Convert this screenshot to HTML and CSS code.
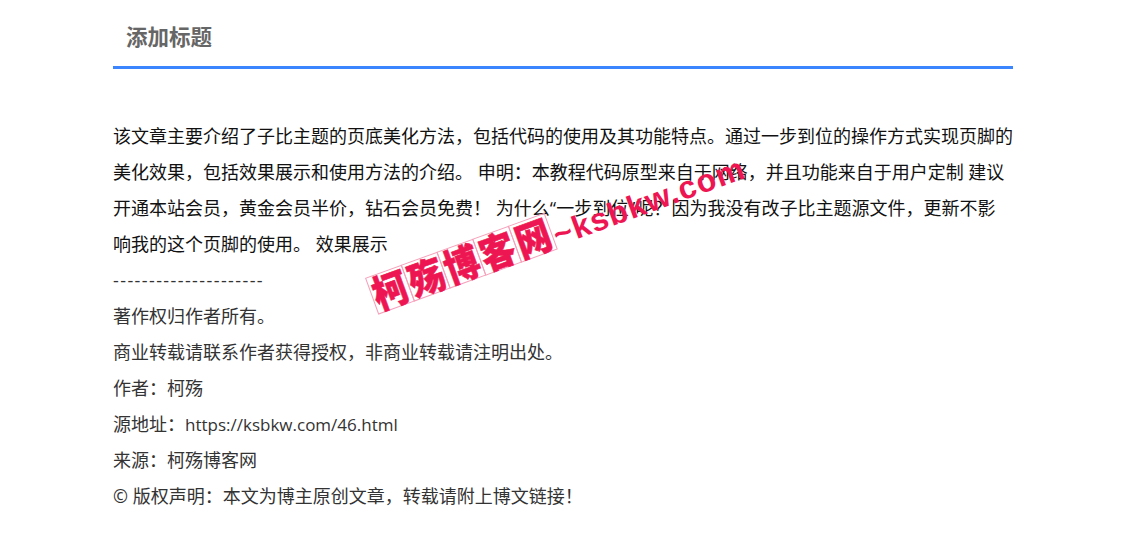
FILE: index.html
```html
<!DOCTYPE html>
<html lang="zh-CN">
<head>
<meta charset="utf-8">
<title>添加标题</title>
<link rel="stylesheet" href="styles.css">
</head>
<body>
<main class="page">
  <h2 class="title"><span>添加标题</span></h2>
  <p class="intro">该文章主要介绍了子比主题的页底美化方法，包括代码的使用及其功能特点。通过一步到位的操作方式实现页脚的美化效果，包括效果展示和使用方法的介绍。 申明：本教程代码原型来自于网络，并且功能来自于用户定制 建议开通本站会员，黄金会员半价，钻石会员免费！ 为什么<span class="quoted">“一步到位”</span>呢？因为我没有改子比主题源文件，更新不影响我的这个页脚的使用。 效果展示</p>
  <div class="copyright">
    <p class="dashes">---------------------</p>
    <p>著作权归作者所有。</p>
    <p>商业转载请联系作者获得授权，非商业转载请注明出处。</p>
    <p>作者：柯殇</p>
    <p>源地址：<span class="url">https://ksbkw.com/46.html</span></p>
    <p>来源：柯殇博客网</p>
    <p>© 版权声明：本文为博主原创文章，转载请附上博文链接！</p>
  </div>
</main>
<div class="watermark">
  <span class="cell"><span class="glyph">柯</span></span><span class="cell"><span class="glyph">殇</span></span><span class="cell"><span class="glyph">博</span></span><span class="cell"><span class="glyph">客</span></span><span class="cell"><span class="glyph">网</span></span><span class="domain">~ksbkw.com</span>
</div>
</body>
</html>
```
FILE: styles.css
```css
* { box-sizing: border-box; }
html, body { margin: 0; padding: 0; background: #fff; }
body {
  font-family: "Open Sans", "Noto Sans CJK SC", sans-serif;
  height: 557px;
  overflow: hidden;
  position: relative;
}
.page { width: 900px; margin: 0 0 0 113px; }
.title {
  margin: 0;
  height: 69px;
  padding: 21px 0 0 13px;
  border-bottom: 3px solid #3b86ff;
  font-size: 21.5px;
  line-height: 32px;
  font-weight: 700;
  color: #666;
}
.intro, .copyright p {
  margin: 0;
  font-size: 18px;
  line-height: 36px;
}
.intro { margin-top: 49px; color: #111; }
.quoted { letter-spacing: 0.2px; }
.copyright { color: #333; }
.copyright .dashes { letter-spacing: 1.4px; }
.url { font-size: 17px; line-height: 1; }
.watermark {
  position: absolute;
  left: 365px;
  top: 278px;
  display: flex;
  align-items: center;
  height: 39px;
  white-space: nowrap;
  transform-origin: 0 0;
  transform: rotate(-20deg);
  color: #ee1652;
  font-weight: 900;
}
.cell {
  width: 39px;
  height: 39px;
  border: 1px solid #f7a0bb;
  margin-right: -1px;
  display: flex;
  align-items: center;
  justify-content: center;
}
.glyph {
  display: block;
  font-size: 39px;
  line-height: 37px;
  transform: scaleX(0.9);
  -webkit-text-stroke: 0.6px #ee1652;
}
.domain {
  font-family: "Liberation Sans", sans-serif;
  font-size: 32px;
  font-weight: 700;
  letter-spacing: 1.2px;
  margin-left: 2px;
  position: relative;
  top: 6px;
}
```
